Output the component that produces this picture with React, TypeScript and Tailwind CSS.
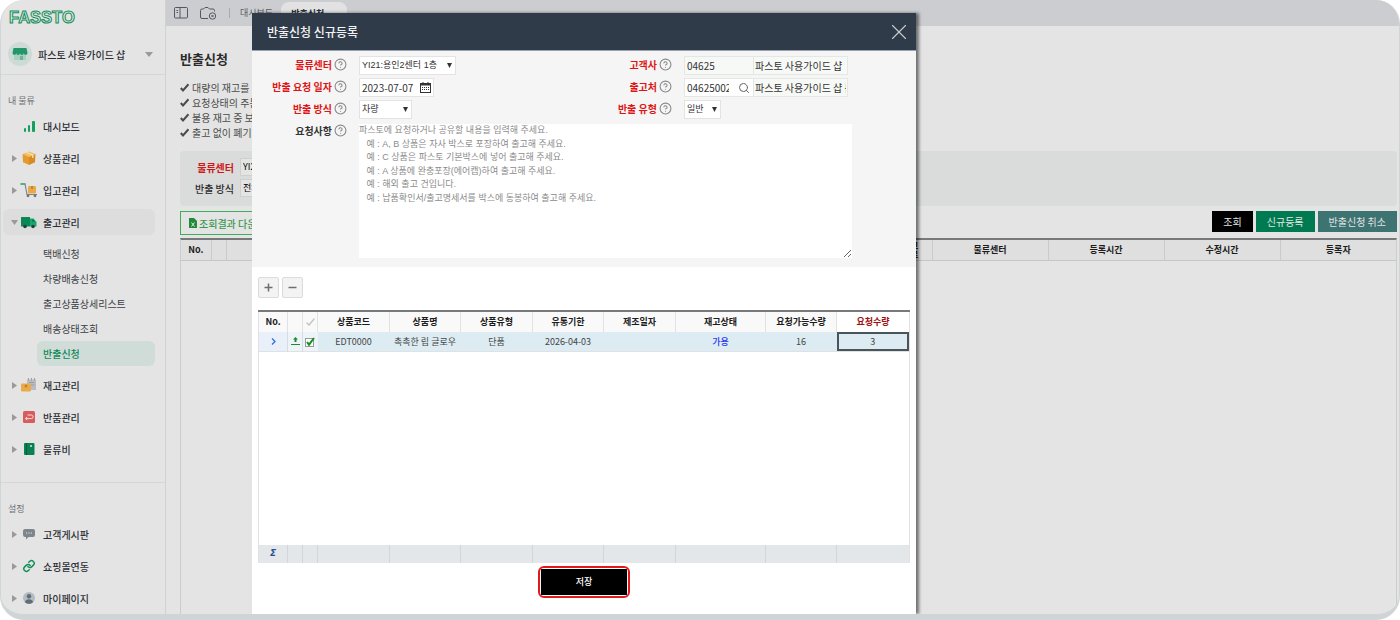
import { useState, type ReactNode } from "react";
import { ChevronDown, CircleQuestionMark, Search, X } from "lucide-react";

const GUIDES = ["대량의 재고를 반출", "요청상태의 주문만", "불용 재고 중 보관", "출고 없이 폐기만"];

const PLACEHOLDER = [
  "파스토에 요청하거나 공유할 내용을 입력해 주세요.",
  "   예 : A, B 상품은 자사 박스로 포장하여 출고해 주세요.",
  "   예 : C 상품은 파스토 기본박스에 넣어 출고해 주세요.",
  "   예 : A 상품에 완충포장(에어캡)하여 출고해 주세요.",
  "   예 : 해외 출고 건입니다.",
  "   예 : 납품확인서/출고명세서를 박스에 동봉하여 출고해 주세요.",
].join("\n");

const SUB_MENU = ["택배신청", "차량배송신청", "출고상품상세리스트", "배송상태조회", "반출신청"];

function BarsIcon() {
  return (
    <svg width="16" height="16" viewBox="0 0 16 16" fill="#12a05c">
      <rect x="3" y="10" width="2" height="4" rx="1" />
      <rect x="7" y="7" width="2" height="7" rx="1" />
      <rect x="11" y="3" width="3" height="11" rx="1" />
    </svg>
  );
}

function BoxIcon() {
  return (
    <svg width="16" height="16" viewBox="0 0 16 16">
      <path d="M8 1.5 14.5 4 8 7 1.5 4Z" fill="#f0bd62" />
      <path d="M1.5 4 8 7v8L2 12.3Z" fill="#e79a2c" />
      <path d="M14.5 4 8 7v8l6-2.7Z" fill="#d98a22" />
      <path d="M4.5 2.8 11 5.6v2.6l1.6-.8V4.8L6.3 2.1Z" fill="#f7dcab" />
    </svg>
  );
}

function CartIcon() {
  return (
    <svg width="18" height="16" viewBox="0 0 18 16" fill="none">
      <path d="M1 2h4" stroke="#22a06b" strokeWidth="1.6" strokeLinecap="round" />
      <path d="M5 2l2 10.5h10" stroke="#80868c" strokeWidth="1.2" />
      <rect x="8" y="4" width="8" height="7.5" rx="1" fill="#e8a94a" />
      <path d="M11 4h2v3h-2z" fill="#c98227" />
      <circle cx="8" cy="13.8" r="1.4" fill="#6c7278" />
      <circle cx="15" cy="13.8" r="1.4" fill="#6c7278" />
    </svg>
  );
}

function TruckIcon() {
  return (
    <svg width="18" height="16" viewBox="0 0 18 16">
      <path d="M1.5 3H10v9.5H1.5a.5.5 0 0 1-.5-.5V3.5a.5.5 0 0 1 .5-.5Z" fill="#0b8654" />
      <path d="M10 4.5h3.500L16.500 8v4.500H10Z" fill="#14a96b" />
      <path d="M12 5.500h1.300l1.700 2.200h-3Z" fill="#0c7c4e" />
      <circle cx="5" cy="12.5" r="1.8" fill="#2f3b40" />
      <circle cx="13" cy="12.5" r="1.8" fill="#2f3b40" />
    </svg>
  );
}

function StockIcon() {
  return (
    <svg width="18" height="16" viewBox="0 0 18 16">
      <path d="M7 2.5h9V13H7Z" fill="#b9bcc0" />
      <path d="M8.5 1v2.500M11.500 1v2.500M14.500 1v2.500M9 5.500h5.500M9 8h5.500" stroke="#9b9fa4" />
      <rect x="1" y="6.5" width="10" height="8" rx="1" fill="#e9ab48" />
      <circle cx="6" cy="9" r="1.5" fill="#cb7f2a" />
    </svg>
  );
}

function ReturnIcon() {
  return (
    <svg width="16" height="16" viewBox="0 0 16 16" fill="none">
      <rect x="2" y="2" width="12" height="12" rx="1.5" fill="#d85c5c" />
      <path d="M6.500 6h3.800a1.700 1.700 0 0 1 0 3.600H4.500M6.200 7.900 4.500 9.600l1.700 1.500" stroke="#f6dada" />
    </svg>
  );
}

function BookIcon() {
  return (
    <svg width="16" height="16" viewBox="0 0 16 16">
      <rect x="3" y="2" width="10.5" height="12" rx="1" fill="#0a8150" />
      <path d="M5.500 2v12" stroke="#075f3a" />
      <circle cx="10" cy="5" r="1" fill="#d6ebe0" />
    </svg>
  );
}

function ChatIcon() {
  return (
    <svg width="16" height="16" viewBox="0 0 16 16">
      <path d="M4 3h8a2 2 0 0 1 2 2v4a2 2 0 0 1-2 2H7.500L5 13.500V11H4a2 2 0 0 1-2-2V5a2 2 0 0 1 2-2Z" fill="#7e868d" />
      <path d="M5 7h1.200M7.400 7h1.200M9.800 7H11" stroke="#e4e4e4" strokeWidth="1.2" />
    </svg>
  );
}

function LinkIcon() {
  return (
    <svg width="14" height="14" viewBox="0 0 24 24" fill="none" stroke="#14905b" strokeWidth="2.5" strokeLinecap="round">
      <path d="M10 13a4.500 4.500 0 0 0 6.500.5l3-3a4.500 4.500 0 0 0-6.400-6.400l-1.500 1.500" />
      <path d="M14 11a4.500 4.500 0 0 0-6.500-.5l-3 3a4.500 4.500 0 0 0 6.400 6.400l1.500-1.500" />
    </svg>
  );
}

function AvatarIcon() {
  return (
    <svg width="16" height="16" viewBox="0 0 16 16">
      <circle cx="8" cy="8" r="6" fill="#b4bac1" />
      <circle cx="8" cy="6.3" r="2.2" fill="#626c76" />
      <path d="M4 12.200c.4-2.200 2-3 4-3s3.600.8 4 3a6 6 0 0 1-8 0Z" fill="#626c76" />
    </svg>
  );
}

function MenuItem({ icon, label, arrow = true, open = false }: { icon: ReactNode; label: string; arrow?: boolean; open?: boolean }) {
  return (
    <li className="flex h-8 items-center pl-[2px] pr-[10px]">
      <a href="#" className={`flex h-[26px] flex-1 items-center rounded-md pl-2 ${open ? "bg-[#dddddd]" : ""}`}>
        <span className="flex w-[7px] justify-center">
          {arrow && (
            <svg width="7" height="7" viewBox="0 0 7 7" fill="#9a9a9a">
              {open ? <path d="M0 1h7L3.500 6Z" /> : <path d="M1 0v7l5-3.500Z" />}
            </svg>
          )}
        </span>
        <span className="flex w-[22px] justify-center">{icon}</span>
        <span className="ml-[3px] text-[10px] font-medium text-[#2c3035]">{label}</span>
      </a>
    </li>
  );
}

function Sidebar() {
  return (
    <aside className="w-[165px] shrink-0 border-r border-[#cfd1d3]">
      <div className="flex h-[34px] items-center pl-[7px]">
        <svg width="72" height="16" viewBox="0 0 72 16" role="img" aria-label="FASSTO">
          <text x="1" y="14" fontFamily="Liberation Sans, sans-serif" fontSize="16.5" fontWeight="700" fill="none" stroke="#0f8f59">
            FASSTO
          </text>
        </svg>
      </div>
      <button type="button" className="flex h-10 w-full items-center pl-[7px] pr-[12px]">
        <span className="flex size-6 items-center justify-center rounded-full bg-[#cddbd6]">
          <svg width="16" height="14" viewBox="0 0 16 14">
            <path d="M2 6h12v7H2Z" fill="#a9cfc0" />
            <path d="M1.500 1h13L15.500 6a1.700 1.700 0 0 1-3.700 0 1.900 1.900 0 0 1-3.800 0 1.900 1.900 0 0 1-3.800 0A1.700 1.700 0 0 1 .5 6Z" fill="#22976a" />
            <rect x="8" y="9" width="3" height="4" fill="#6fb497" />
          </svg>
        </span>
        <span className="ml-[6px] flex-1 text-left text-[10px] font-medium text-[#2c3035]">파스토 사용가이드 샵</span>
        <svg width="8" height="5" viewBox="0 0 8 5" fill="#9a9a9a">
          <path d="M0 0h8L4 5Z" />
        </svg>
      </button>
      <nav className="border-t border-[#d6d7d8]">
        <h2 className="mt-[18px] pl-[7px] text-[9px] leading-4 text-[#6c7177]">내 물류</h2>
        <ul className="mt-px">
          <MenuItem icon={<BarsIcon />} label="대시보드" arrow={false} />
          <MenuItem icon={<BoxIcon />} label="상품관리" />
          <MenuItem icon={<CartIcon />} label="입고관리" />
          <MenuItem icon={<TruckIcon />} label="출고관리" open />
          <li>
            <ul className="py-[3px] pl-9 pr-[10px]">
              {SUB_MENU.map((name) => (
                <li key={name}>
                  <a
                    href="#"
                    className={`flex h-[25px] items-center rounded-md pl-[6px] text-[10px] ${
                      name === "반출신청" ? "bg-[#d0dcd7] font-medium text-[#0e8a58]" : "text-[#3c4045]"
                    }`}
                  >
                    {name}
                  </a>
                </li>
              ))}
            </ul>
          </li>
          <MenuItem icon={<StockIcon />} label="재고관리" />
          <MenuItem icon={<ReturnIcon />} label="반품관리" />
          <MenuItem icon={<BookIcon />} label="물류비" />
        </ul>
        <h2 className="mt-[17px] border-t border-[#d6d7d8] pl-[7px] pt-[18px] text-[9px] leading-4 text-[#6c7177]">설정</h2>
        <ul className="mt-px">
          <MenuItem icon={<ChatIcon />} label="고객게시판" />
          <MenuItem icon={<LinkIcon />} label="쇼핑몰연동" />
          <MenuItem icon={<AvatarIcon />} label="마이페이지" />
        </ul>
      </nav>
    </aside>
  );
}

function TopBar() {
  return (
    <header className="flex h-[26px] items-center bg-[#cccdd1] pl-2 text-[9px]">
      <button type="button" aria-label="메뉴 접기">
        <svg width="14" height="12" viewBox="0 0 14 12" fill="none" stroke="#54585e">
          <rect x=".5" y=".5" width="13" height="10.5" rx="1" />
          <path d="M6 .5V11M2.500 3.500H4M2.500 5.500H4" />
        </svg>
      </button>
      <button type="button" aria-label="최근 메뉴" className="ml-3">
        <svg width="17" height="13" viewBox="0 0 17 13" fill="none" stroke="#54585e">
          <path d="M8 11.500H2A1.500 1.500 0 0 1 .5 10V3.500A1.500 1.500 0 0 1 2 2h1.500L5 .5h3L9.500 2H13a1.500 1.500 0 0 1 1.500 1.500v1" />
          <circle cx="12.5" cy="9" r="3.2" />
          <path d="M11.500 8l2 2m0-2-2 2" />
        </svg>
      </button>
      <span className="ml-3 h-[10px] w-px bg-[#a9abb0]" />
      <a href="#" className="ml-[10px] text-[#5a5d62]">대시보드</a>
      <a href="#" className="ml-2 flex h-6 items-center gap-1 self-end rounded-t-lg bg-[#e2e2e3] px-[10px] font-bold text-[#2c3035]">
        반출신청
        <ChevronDown size={9} />
      </a>
    </header>
  );
}

function ListPage() {
  return (
    <main className="flex flex-1 flex-col pl-[14px] pr-[2px] pt-[23px]">
      <h1 className="text-[13px] font-bold leading-5 text-[#2b2b2b]">반출신청</h1>
      <ul className="mt-[11px] text-[10px] leading-[15px] text-[#4b4b4b]">
        {GUIDES.map((text) => (
          <li key={text} className="flex items-center gap-[3px]">
            <svg width="9" height="9" viewBox="0 0 9 9" fill="none" stroke="#4b4b4b" strokeWidth="2">
              <path d="M.8 5 3 7.400 8.500 1.200" />
            </svg>
            {text}
          </li>
        ))}
      </ul>
      <div className="mt-[11px] flex h-[55px] flex-col justify-center gap-[3px] rounded-sm bg-[#dadbdb] pb-[2px] pl-1 text-[10px]">
        <div className="flex items-center gap-[6px]">
          <label htmlFor="f-center" className="w-[50px] text-right font-bold text-[#cf1717]">물류센터</label>
          <select id="f-center" className="h-[18px] w-24 appearance-none border border-[#cfcfcf] bg-[#e4e4e4] pl-[2px] text-[9px]">
            <option>YI21:용인2센터 1층</option>
          </select>
        </div>
        <div className="flex items-center gap-[6px]">
          <label htmlFor="f-way" className="w-[50px] text-right font-medium text-[#2b2b2b]">반출 방식</label>
          <select id="f-way" className="h-[18px] w-14 appearance-none border border-[#cfcfcf] bg-[#e4e4e4] pl-[2px] text-[9px]">
            <option>전체</option>
          </select>
        </div>
      </div>
      <div className="mt-[5px] flex items-start justify-between">
        <button type="button" className="flex h-6 items-center gap-[2px] border border-[#3fae5a] px-2 text-[10px] font-medium text-[#3a9a50]">
          <svg width="8" height="10" viewBox="0 0 8 10">
            <path d="M0 0h5l3 3v7H0Z" fill="#1f8a3c" />
            <path d="M2.500 4.500l3 4m0-4-3 4" stroke="#e4e4e4" />
          </svg>
          조회결과 다운로드
        </button>
        <div className="flex gap-[3px] text-[10px] text-[#e4e4e4]">
          <button type="button" className="h-[21px] bg-black px-[11px]">조회</button>
          <button type="button" className="h-[21px] bg-[#007a51] px-[11px]">신규등록</button>
          <button type="button" className="h-[21px] bg-[#3d7371] px-[11px]">반출신청 취소</button>
        </div>
      </div>
      <div className="mt-[3px] flex-1 border-x border-t-2 border-x-[#cacccd] border-t-[#77787a]">
        <table className="w-full table-fixed border-collapse text-[9px] font-bold text-[#1c1c1c]">
          <thead>
            <tr className="h-5 border-b border-[#c4c6c7] bg-[#dfdfdf]">
              <th className="w-[30px]">No.</th>
              <th className="w-[15px] border-l border-[#c8cacb]" />
              <th className="border-l border-[#c8cacb]" />
              <th className="w-[44px] border-l border-[#c8cacb] leading-[9px]">입고<br />완료</th>
              <th className="w-[116px] border-l border-[#c8cacb]">물류센터</th>
              <th className="w-[116px] border-l border-[#c8cacb]">등록시간</th>
              <th className="w-[116px] border-l border-[#c8cacb]">수정시간</th>
              <th className="w-[116px] border-l border-[#c8cacb]">등록자</th>
            </tr>
          </thead>
        </table>
      </div>
    </main>
  );
}

function FieldLabel({ htmlFor, required = true, children }: { htmlFor: string; required?: boolean; children: ReactNode }) {
  return (
    <label
      htmlFor={htmlFor}
      className={`flex h-4 items-center justify-end gap-[2px] whitespace-nowrap text-[10px] font-bold ${required ? "text-[#e01414]" : "text-[#333]"}`}
    >
      {children}
      <CircleQuestionMark size={13} strokeWidth={2} className="text-[#8a8a8a]" />
    </label>
  );
}

function SelectBox({ id, value, width }: { id: string; value: string; width: string }) {
  return (
    <div className={`relative h-[19px] ${width}`}>
      <select id={id} className="h-full w-full appearance-none border border-[#e3e3e3] bg-white pl-[2px] font-[Liberation_Sans,'Noto_Sans_CJK_KR',sans-serif] text-[9px] text-[#333]">
        <option>{value}</option>
      </select>
      <svg width="5" height="5" viewBox="0 0 5 5" fill="#333" className="pointer-events-none absolute right-1 top-[7px]">
        <path d="M0 0h5L2.500 5Z" />
      </svg>
    </div>
  );
}

const ITEM_COLS = [
  { name: "상품코드", width: "w-[72px]" },
  { name: "상품명", width: "w-[71px]" },
  { name: "상품유형", width: "w-[72px]" },
  { name: "유통기한", width: "w-[71px]" },
  { name: "제조일자", width: "w-[72px]" },
  { name: "재고상태", width: "w-[90px]" },
  { name: "요청가능수량", width: "w-[71px]" },
];

function ItemTable() {
  const [checked, setChecked] = useState(true);
  const [qty, setQty] = useState("3");

  return (
    <table className="mt-3 w-full table-fixed border-collapse border-x border-t-2 border-x-[#dfe1e3] border-t-[#77797b] text-center text-[9px] text-[#444]">
      <thead>
        <tr className="h-[21px] bg-[#f9f9f9] text-[#1c1c1c]">
          <th className="w-[29px]">No.</th>
          <th className="w-[15px] border-l border-[#dfe1e3]" />
          <th className="w-[15px] border-l border-[#dfe1e3]">
            <svg width="9" height="8" viewBox="0 0 9 8" fill="none" stroke="#c5c5c5" strokeWidth="1.5" className="mx-auto">
              <path d="M.5 4.500 3 7l5.500-6.500" />
            </svg>
          </th>
          {ITEM_COLS.map((col) => (
            <th key={col.name} className={`border-l border-[#dfe1e3] ${col.width}`}>{col.name}</th>
          ))}
          <th className="border-l border-[#dfe1e3] bg-white text-[#a01111]">요청수량</th>
        </tr>
      </thead>
      <tbody>
        <tr className="h-[19px] border-b border-[#dfe1e3] bg-[#dcecf2]">
          <td className="bg-[#e9f0fa]">
            <svg width="5" height="7" viewBox="0 0 5 7" fill="none" stroke="#2f6fe0" strokeWidth="1.3" className="mx-auto">
              <path d="M1 .5 4 3.500 1 6.500" />
            </svg>
          </td>
          <td className="border-l border-[#d3dde2] bg-[#edf3f6]">
            <svg width="9" height="9" viewBox="0 0 9 9" fill="#1c8a35" className="mx-auto">
              <path d="M4.500 0 7 2.500H5.500V5h-2V2.500H2ZM0 7h9v1H0Z" />
            </svg>
          </td>
          <td className="border-l border-[#d3dde2] bg-[#edf3f6]">
            <label className="flex justify-center">
              <input
                type="checkbox"
                aria-label="상품 선택"
                checked={checked}
                onChange={(e) => setChecked(e.target.checked)}
                className="peer sr-only"
              />
              <svg width="10" height="10" viewBox="0 0 10 10" fill="none">
                <rect x=".5" y="1.5" width="8" height="8" fill="#fff" stroke="#9a9a9a" />
                {checked && <path d="M2 5l2 2.700L9 1" stroke="#149025" strokeWidth="2" />}
              </svg>
            </label>
          </td>
          <td>EDT0000</td>
          <td>촉촉한 립 글로우</td>
          <td>단품</td>
          <td>2026-04-03</td>
          <td />
          <td className="font-medium text-[#2b39f0]">가용</td>
          <td>16</td>
          <td className="p-0">
            <input
              aria-label="요청수량"
              value={qty}
              onChange={(e) => setQty(e.target.value)}
              className="block h-[19px] w-full border-2 border-[#4a555b] bg-transparent text-center"
            />
          </td>
        </tr>
        <tr>
          <td colSpan={11} className="h-[193px]" />
        </tr>
      </tbody>
      <tfoot>
        <tr className="h-[18px] bg-[#e4e7ea]">
          <td className="font-[DejaVu_Sans,sans-serif] text-[9px] font-bold italic text-[#2a4f9a]">Σ</td>
          <td className="border-l border-[#d2d6da]" />
          <td className="border-l border-[#d2d6da]" />
          {ITEM_COLS.map((col) => (
            <td key={col.name} className="border-l border-[#d2d6da]" />
          ))}
          <td className="border-l border-[#d2d6da]" />
        </tr>
      </tfoot>
    </table>
  );
}

function RequestDialog() {
  return (
    <section
      role="dialog"
      aria-labelledby="dialog-title"
      className="absolute bottom-0 left-[251px] top-[13px] flex w-[664px] flex-col bg-white shadow-[3px_0_3px_rgba(0,0,0,0.5)]"
    >
      <header className="flex h-[37px] shrink-0 items-center justify-between bg-[#303b49] pl-[15px] pr-1 text-[#f2f3f5]">
        <h2 id="dialog-title" className="text-[12px] font-medium">반출신청 신규등록</h2>
        <button type="button" aria-label="닫기">
          <X size={26} strokeWidth={1} className="text-[#c9cdd2]" />
        </button>
      </header>
      <form className="grid grid-cols-[95px_221px_80px_168px] gap-x-3 gap-y-[3px] border-t border-[#9aa1b0] bg-[#f5f5f5] pb-[9px] pt-[5px] text-[10px] text-[#333]">
        <FieldLabel htmlFor="center">물류센터</FieldLabel>
        <SelectBox id="center" value="YI21:용인2센터 1층" width="w-[97px]" />
        <FieldLabel htmlFor="customer">고객사</FieldLabel>
        <div className="flex h-[19px] w-[164px] border border-[#e4e7e2] bg-[#f7f9f6]">
          <input id="customer" readOnly defaultValue="04625" className="w-[69px] border-r border-[#e4e7e2] pl-[2px]" />
          <input aria-label="고객사명" readOnly defaultValue="파스토 사용가이드 샵" className="min-w-0 flex-1 px-px" />
        </div>

        <FieldLabel htmlFor="date">반출 요청 일자</FieldLabel>
        <div className="flex h-[19px] w-[75px] items-center border border-[#e3e3e3] bg-white">
          <input id="date" defaultValue="2023-07-07" className="w-[60px] pl-[2px]" />
          <button type="button" aria-label="달력">
            <svg width="11" height="11" viewBox="0 0 11 11" fill="none" stroke="#333">
              <rect x=".5" y="1.5" width="10" height="9" />
              <path d="M0 2.500h11" strokeWidth="2" />
              <path d="M3 0v2M8 0v2" />
              <path d="M2 5.500h7M2 7.500h7" strokeDasharray="1 1" />
            </svg>
          </button>
        </div>
        <FieldLabel htmlFor="dest">출고처</FieldLabel>
        <div className="flex h-[19px] w-[164px] border border-[#e4e7e2] bg-white">
          <div className="flex w-[69px] items-center justify-between border-r border-[#e4e7e2] pr-[3px]">
            <input id="dest" defaultValue="04625002" className="w-[44px] pl-[2px]" />
            <button type="button" aria-label="출고처 검색">
              <Search size={12} strokeWidth={2} className="text-[#666]" />
            </button>
          </div>
          <input aria-label="출고처명" readOnly defaultValue="파스토 사용가이드 샵 본사" className="min-w-0 flex-1 bg-[#f7f9f6] px-px" />
        </div>

        <FieldLabel htmlFor="way">반출 방식</FieldLabel>
        <SelectBox id="way" value="차량" width="w-[53px]" />
        <FieldLabel htmlFor="type">반출 유형</FieldLabel>
        <SelectBox id="type" value="일반" width="w-[37px]" />

        <FieldLabel htmlFor="memo" required={false}>요청사항</FieldLabel>
        <textarea
          id="memo"
          placeholder={PLACEHOLDER}
          className="col-span-3 mt-[2px] h-[134px] resize-y bg-white font-[Liberation_Sans,'Noto_Sans_CJK_KR',sans-serif] text-[9px] leading-normal placeholder:text-[#8b8b8b]"
        />
      </form>
      <div className="flex flex-1 flex-col px-[6px] pt-[10px]">
        <div className="flex gap-[3px]">
          <button type="button" aria-label="행 추가" className="flex size-[21px] items-center justify-center rounded-xs border border-[#dcdcdc] bg-[#f3f3f3] text-[#6e6e6e]">
            <svg width="9" height="9" viewBox="0 0 9 9" stroke="currentColor" strokeWidth="1.5">
              <path d="M4.500 0.500v8M.5 4.500h8" />
            </svg>
          </button>
          <button type="button" aria-label="행 삭제" className="flex size-[21px] items-center justify-center rounded-xs border border-[#dcdcdc] bg-[#f3f3f3] text-[#6e6e6e]">
            <svg width="9" height="9" viewBox="0 0 9 9" stroke="currentColor" strokeWidth="1.5">
              <path d="M.5 4.500h8" />
            </svg>
          </button>
        </div>
        <ItemTable />
        <div className="mt-[3px] self-center rounded-md border-2 border-[#e01a1a] p-px">
          <button type="button" className="block h-[26px] w-[86px] bg-black text-[9px] font-medium text-white">저장</button>
        </div>
      </div>
    </section>
  );
}

export default function App() {
  return (
    <div className="relative flex min-h-screen overflow-hidden rounded-[24px] border-x border-b-[6px] border-[#cfd4d7] bg-[#e4e4e4] font-['Noto_Sans_CJK_KR',sans-serif]">
      <Sidebar />
      <div className="flex min-w-0 flex-1 flex-col">
        <TopBar />
        <ListPage />
      </div>
      <RequestDialog />
    </div>
  );
}
